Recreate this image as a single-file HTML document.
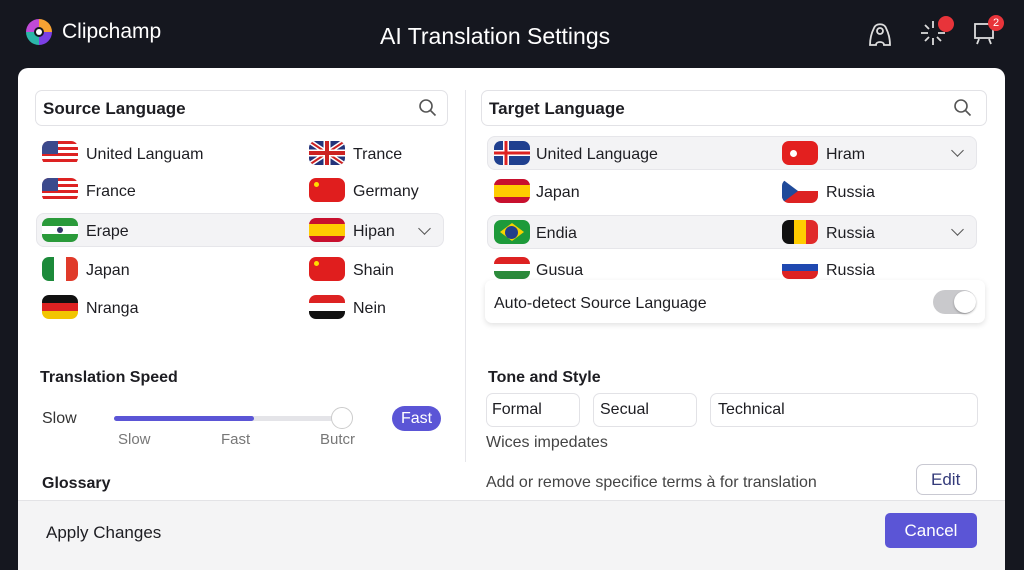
<!DOCTYPE html><html><head><meta charset="utf-8"><style>
*{margin:0;padding:0;box-sizing:border-box}
body{width:1024px;height:559px;background:#15171f;font-family:"Liberation Sans",sans-serif;position:relative;overflow:hidden;color:#1d1d22}
.a{position:absolute}
.t{position:absolute;font-size:16px;line-height:24px;white-space:nowrap}
.f{position:absolute;width:36px;height:24px;border-radius:7px;overflow:hidden}
.box{position:absolute;border:1px solid #e2e2e6;border-radius:7px;background:#fff}
.hl{position:absolute;background:#f3f3f5;border:1px solid #e6e6ea;border-radius:8px}
.chev{position:absolute;width:9px;height:9px;border-right:1.5px solid #555;border-bottom:1.5px solid #555;transform:rotate(45deg)}
.b{font-weight:bold}
</style></head><body>
<svg class="a" style="left:24px;top:17px" width="30" height="30" viewBox="0 0 30 30">
<path d="M15 2 A13 13 0 0 1 28 15 L20 15 A5 5 0 0 0 15 10Z" fill="#f7a233"/>
<path d="M28 15 A13 13 0 0 1 15 28 L15 20 A5 5 0 0 0 20 15Z" fill="#7b3fe4"/>
<path d="M15 28 A13 13 0 0 1 2 15 L10 15 A5 5 0 0 0 15 20Z" fill="#2bb5a8"/>
<path d="M2 15 A13 13 0 0 1 15 2 L15 10 A5 5 0 0 0 10 15Z" fill="#c04bd8"/>
<circle cx="15" cy="15" r="3" fill="#fff"/></svg>
<div class="t" style="left:62px;top:19px;color:#fff;font-size:21px;line-height:26px">Clipchamp</div>
<div class="t" style="left:380px;top:22px;color:#fff;font-size:23px;line-height:28px">AI Translation Settings</div>
<svg class="a" style="left:866px;top:18px" width="28" height="30" viewBox="0 0 28 30" fill="none" stroke="#ddd" stroke-width="1.8"><path d="M4 27 C4 20 6 14 8 10 C10 5 18 5 20 10 C22 14 24 20 24 27 L18 27 C18 23 10 23 10 27Z"/><circle cx="14" cy="13" r="3"/></svg>
<svg class="a" style="left:918px;top:18px" width="30" height="30" viewBox="0 0 30 30" stroke="#ddd" stroke-width="1.8"><path d="M15 3v7M15 20v7M3 15h7M20 15h7M7 7l4 4M19 19l4 4M7 23l4-4"/></svg>
<div class="a" style="left:938px;top:16px;width:16px;height:16px;border-radius:50%;background:#e8343a"></div>
<svg class="a" style="left:970px;top:18px" width="30" height="30" viewBox="0 0 30 30" fill="none" stroke="#ddd" stroke-width="1.8"><rect x="5" y="6" width="18" height="14"/><path d="M7 26l2-5M21 26l-2-5"/></svg>
<div class="a" style="left:988px;top:15px;width:16px;height:16px;border-radius:50%;background:#e8343a;color:#fff;font-size:11px;text-align:center;line-height:16px">2</div>
<div class="a" style="left:18px;top:68px;width:987px;height:500px;background:#fff;border-radius:10px"></div>
<div class="a" style="left:18px;top:500px;width:987px;height:70px;background:#f4f4f5;border-top:1px solid #e3e3e6"></div>
<div class="a" style="left:465px;top:90px;width:1px;height:372px;background:#e6e6ea"></div>
<div class="box" style="left:35px;top:90px;width:413px;height:36px"></div>
<div class="t b" style="left:43px;top:97px;font-size:17px">Source Language</div>
<svg class="a" style="left:418px;top:98px" width="20" height="20" viewBox="0 0 20 20" fill="none" stroke="#555" stroke-width="1.6"><circle cx="8" cy="8" r="6"/><path d="M12.5 12.5l5 5"/></svg>
<div class="box" style="left:481px;top:90px;width:506px;height:36px"></div>
<div class="t b" style="left:489px;top:97px;font-size:17px">Target Language</div>
<svg class="a" style="left:953px;top:98px" width="20" height="20" viewBox="0 0 20 20" fill="none" stroke="#555" stroke-width="1.6"><circle cx="8" cy="8" r="6"/><path d="M12.5 12.5l5 5"/></svg>
<div class="hl" style="left:36px;top:213px;width:408px;height:34px"></div>
<div class="chev" style="left:420px;top:224px"></div>
<div class="f" style="left:42px;top:141px;background:repeating-linear-gradient(#d22 0 3px,#fff 3px 6px)"><div style="width:16px;height:13px;background:#3c4a8c"></div></div>
<div class="t" style="left:86px;top:143px">United Languam</div>
<div class="f" style="left:42px;top:178px;background:repeating-linear-gradient(#d22 0 3px,#fff 3px 6px)"><div style="width:16px;height:13px;background:#3c4a8c"></div></div>
<div class="t" style="left:86px;top:180px">France</div>
<div class="f" style="left:42px;top:218px;background:linear-gradient(#2a9a3a 0 8px,#fff 8px 16px,#2a9a3a 16px)"><div style="margin:9px auto;width:6px;height:6px;border-radius:50%;background:#336"></div></div>
<div class="t" style="left:86px;top:220px">Erape</div>
<div class="f" style="left:42px;top:257px;background:linear-gradient(90deg,#1c8a3a 0 12px,#fff 12px 24px,#e03a2a 24px)"></div>
<div class="t" style="left:86px;top:259px">Japan</div>
<div class="f" style="left:42px;top:295px;background:linear-gradient(#111 0 8px,#d22 8px 16px,#f2c500 16px)"></div>
<div class="t" style="left:86px;top:297px">Nranga</div>
<div class="f" style="left:309px;top:141px;background:#23337a"><svg width="36" height="24"><path d="M0 0L36 24M36 0L0 24" stroke="#fff" stroke-width="5"/><path d="M0 0L36 24M36 0L0 24" stroke="#c22" stroke-width="2"/><path d="M18 0v24M0 12h36" stroke="#fff" stroke-width="7"/><path d="M18 0v24M0 12h36" stroke="#c22" stroke-width="4"/></svg></div>
<div class="t" style="left:353px;top:143px">Trance</div>
<div class="f" style="left:309px;top:178px;background:#e01e1e"><div style="margin:4px 5px;width:5px;height:5px;background:#fd0;border-radius:50%"></div></div>
<div class="t" style="left:353px;top:180px">Germany</div>
<div class="f" style="left:309px;top:218px;background:linear-gradient(#c8102e 0 6px,#fc0 6px 18px,#c8102e 18px)"></div>
<div class="t" style="left:353px;top:220px">Hipan</div>
<div class="f" style="left:309px;top:257px;background:#e01e1e"><div style="margin:4px 5px;width:5px;height:5px;background:#fd0;border-radius:50%"></div></div>
<div class="t" style="left:353px;top:259px">Shain</div>
<div class="f" style="left:309px;top:295px;background:linear-gradient(#d22 0 8px,#fff 8px 16px,#111 16px)"></div>
<div class="t" style="left:353px;top:297px">Nein</div>
<div class="hl" style="left:487px;top:136px;width:490px;height:34px"></div>
<div class="hl" style="left:487px;top:215px;width:490px;height:34px"></div>
<div class="chev" style="left:953px;top:146px"></div>
<div class="chev" style="left:953px;top:225px"></div>
<div class="f" style="left:494px;top:141px;background:#1f3f8f"><svg width="36" height="24"><path d="M12 0v24M0 12h36" stroke="#fff" stroke-width="6"/><path d="M12 0v24M0 12h36" stroke="#d22" stroke-width="3"/></svg></div>
<div class="t" style="left:536px;top:143px">United Language</div>
<div class="f" style="left:494px;top:179px;background:linear-gradient(#c8102e 0 6px,#fc0 6px 18px,#c8102e 18px)"></div>
<div class="t" style="left:536px;top:181px">Japan</div>
<div class="f" style="left:494px;top:220px;background:#1d9a3a"><div style="margin:3px auto;width:24px;height:18px;background:#f6d300;clip-path:polygon(50% 0,100% 50%,50% 100%,0 50%)"></div></div>
<div class="a" style="left:505px;top:226px;width:13px;height:13px;border-radius:50%;background:#233e8b"></div>
<div class="t" style="left:536px;top:222px">Endia</div>
<div class="f" style="left:494px;top:257px;height:22px;background:linear-gradient(#d22 0 7px,#fff 7px 14px,#2a8a3a 14px)"></div>
<div class="t" style="left:536px;top:259px">Gusua</div>
<div class="f" style="left:782px;top:141px;background:#e3201f"><div style="margin:9px 8px;width:7px;height:7px;border-radius:50%;background:#fff"></div></div>
<div class="t" style="left:826px;top:143px">Hram</div>
<div class="f" style="left:782px;top:179px;background:linear-gradient(#fff 0 12px,#d22 12px)"><div style="width:16px;height:24px;background:#1f4a9a;clip-path:polygon(0 0,100% 50%,0 100%)"></div></div>
<div class="t" style="left:826px;top:181px">Russia</div>
<div class="f" style="left:782px;top:220px;background:linear-gradient(90deg,#111 0 12px,#fc0 12px 24px,#e02a2a 24px)"></div>
<div class="t" style="left:826px;top:222px">Russia</div>
<div class="f" style="left:782px;top:257px;height:22px;background:linear-gradient(#fff 0 7px,#1f48b0 7px 14px,#d22 14px)"></div>
<div class="t" style="left:826px;top:259px">Russia</div>
<div class="a" style="left:485px;top:280px;width:500px;height:43px;background:#fff;border-radius:7px;box-shadow:0 2px 6px rgba(0,0,0,.12)"></div>
<div class="t" style="left:494px;top:292px">Auto-detect Source Language</div>
<div class="a" style="left:933px;top:290px;width:43px;height:24px;border-radius:12px;background:#c9c9cc"></div>
<div class="a" style="left:954px;top:291px;width:22px;height:22px;border-radius:50%;background:#fff;box-shadow:0 1px 2px rgba(0,0,0,.3)"></div>
<div class="t b" style="left:40px;top:366px">Translation Speed</div>
<div class="t" style="left:42px;top:407px;color:#333">Slow</div>
<div class="a" style="left:114px;top:416px;width:228px;height:5px;border-radius:3px;background:#e4e4e8"></div>
<div class="a" style="left:114px;top:416px;width:140px;height:5px;border-radius:3px;background:#5b55d6"></div>
<div class="a" style="left:331px;top:407px;width:22px;height:22px;border-radius:50%;background:#fff;border:1px solid #ccc"></div>
<div class="t" style="left:118px;top:428px;font-size:15px;color:#777">Slow</div>
<div class="t" style="left:221px;top:428px;font-size:15px;color:#777">Fast</div>
<div class="t" style="left:320px;top:428px;font-size:15px;color:#777">Butcr</div>
<div class="a" style="left:392px;top:406px;width:49px;height:25px;border-radius:13px;background:#5b55d6;color:#fff;font-size:16px;text-align:center;line-height:25px">Fast</div>
<div class="t b" style="left:488px;top:366px">Tone and Style</div>
<div class="box" style="left:486px;top:393px;width:94px;height:34px"></div><div class="t" style="left:492px;top:398px">Formal</div>
<div class="box" style="left:593px;top:393px;width:104px;height:34px"></div><div class="t" style="left:600px;top:398px">Secual</div>
<div class="box" style="left:710px;top:393px;width:268px;height:34px"></div><div class="t" style="left:718px;top:398px">Technical</div>
<div class="t" style="left:486px;top:431px;color:#444">Wices impedates</div>
<div class="t" style="left:486px;top:471px;color:#444">Add or remove specifice terms à for translation</div>
<div class="box" style="left:916px;top:464px;width:61px;height:31px;border-color:#c9c9d2"></div><div class="t" style="left:931px;top:468px;color:#333a7a;font-size:17px">Edit</div>
<div class="t b" style="left:42px;top:472px">Glossary</div>
<div class="t" style="left:46px;top:521px;font-size:17px">Apply Changes</div>
<div class="a" style="left:885px;top:513px;width:92px;height:35px;border-radius:5px;background:#5b55d6;color:#fff;font-size:17px;text-align:center;line-height:35px">Cancel</div>
</body></html>
